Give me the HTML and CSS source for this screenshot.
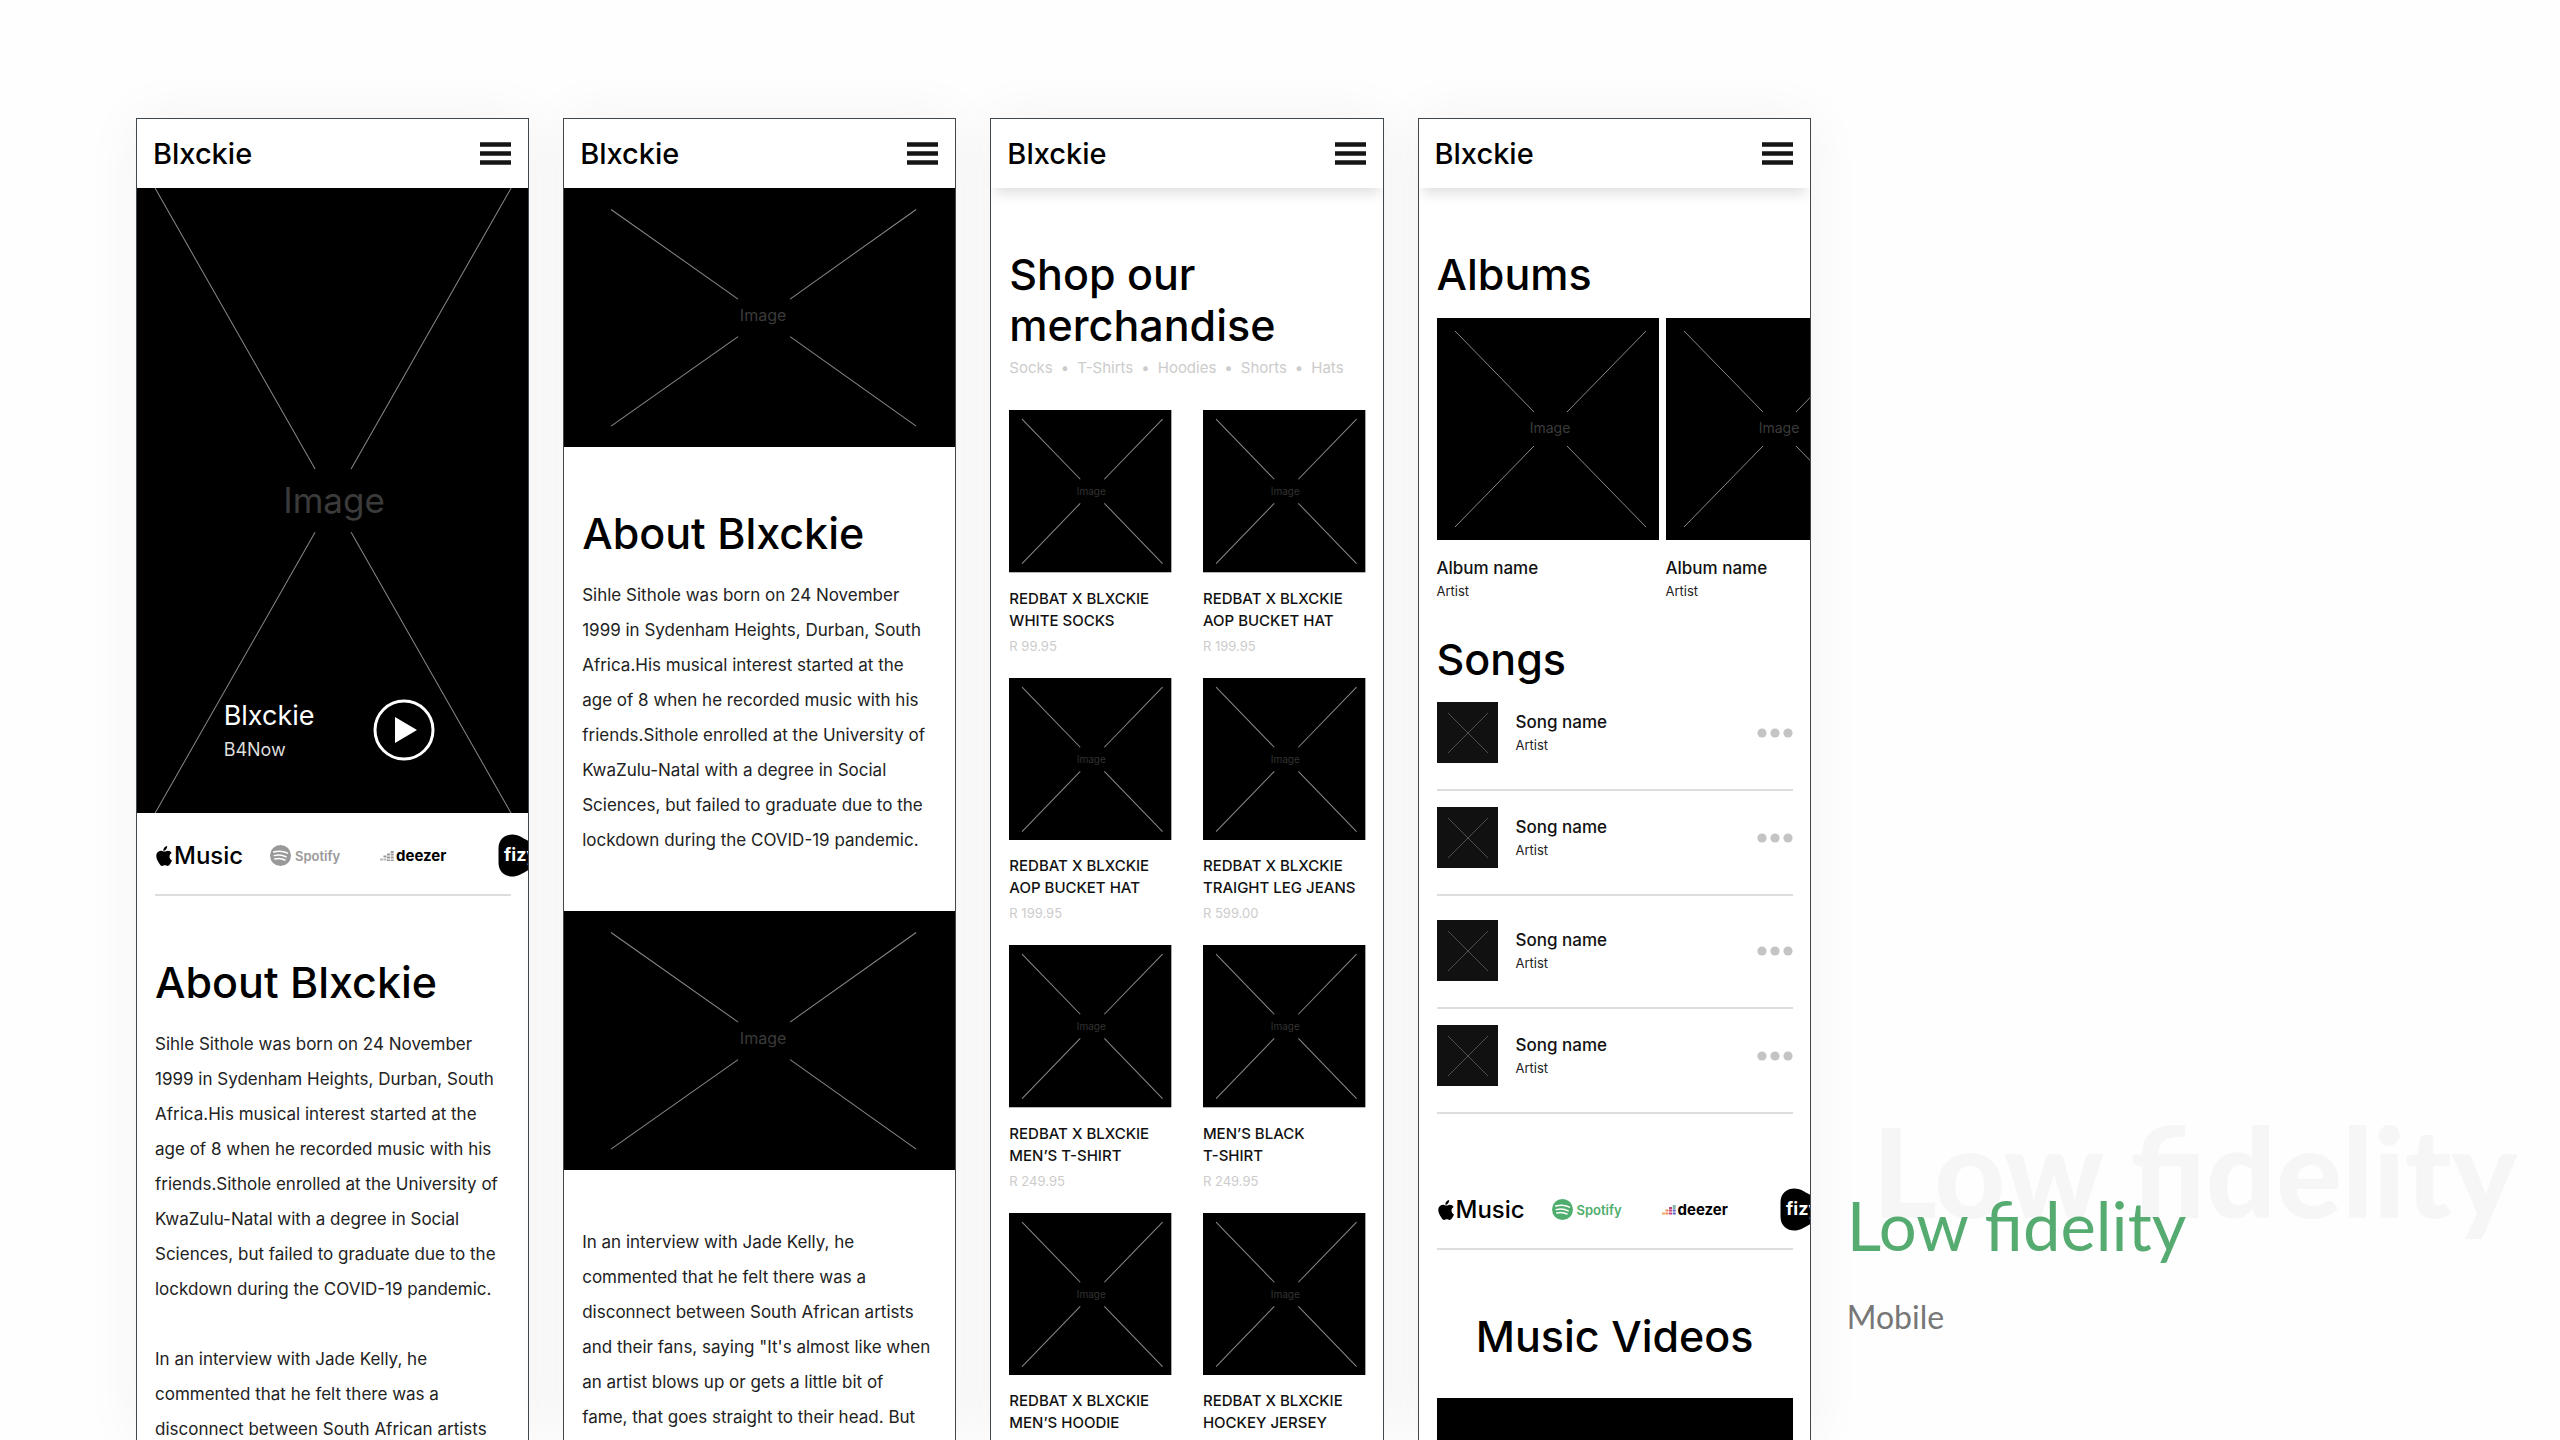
FILE: index.html
```html
<!DOCTYPE html>
<html lang="en">

<head>
    <meta charset="UTF-8">
    <meta name="viewport" content="width=device-width, initial-scale=1.0">
    <title>Blxckie - Low fidelity</title>
    <link rel="stylesheet" href="styles.css">
</head>

<body>
    <!-- shared drawings -->
    <svg class="sprite" aria-hidden="true">
        <symbol id="burger" viewBox="0 0 31 23">
            <path d="M0 2.500H31M0 11.500H31M0 20.500H31" stroke="#151515" stroke-width="4.400" />
        </symbol>
        <symbol id="img-wide" viewBox="0 0 391 259">
            <rect width="391" height="259" />
            <path d="M47 21.500L174 111M352 21.500L226 111M47 238L174 148.500M352 238L226 148.500" stroke="#888" fill="none" />
        </symbol>
        <symbol id="img-card" viewBox="0 0 162 162">
            <rect width="162" height="162" />
            <path d="M13 9L71 69M153 9L95 69M13 153L71 93M153 153L95 93" stroke="#888" fill="none" />
        </symbol>
        <symbol id="img-album" viewBox="0 0 222 222">
            <rect width="222" height="222" />
            <path d="M18 13L97 94M209 13L130 94M18 209L97 128M209 209L130 128" stroke="#888" fill="none" />
        </symbol>
        <symbol id="img-song" viewBox="0 0 61 61">
            <rect width="61" height="61" fill="#111" />
            <path d="M11 11L51 51M51 11L11 51" stroke="#505050" fill="none" />
        </symbol>
        <symbol id="dots" viewBox="0 0 36 10">
            <circle cx="5" cy="5" r="4.600" />
            <circle cx="18" cy="5" r="4.600" />
            <circle cx="31" cy="5" r="4.600" />
        </symbol>
        <symbol id="apple" viewBox="0 0 16 20">
            <path d="M11.200 0C11.300 1.400 10.800 2.600 10 3.500C9.300 4.300 8.300 4.900 7.300 4.800C7.200 3.500 7.700 2.400 8.400 1.600C9.100 .7 10.200 .1 11.200 0ZM15.600 6.900C14.200 7.800 13.500 9 13.500 10.600C13.500 12.500 14.600 13.900 16 14.500C15.600 15.700 14.900 17 14.100 18.100C13.400 19.100 12.700 20 11.600 20C10.500 20 10.200 19.300 8.900 19.300C7.600 19.300 7.200 20 6.200 20C5.100 20 4.300 19 3.600 18C0 13.200 -.9 8 2 5.900C3 5.100 4.100 4.800 5.200 4.800C6.500 4.800 7.400 5.600 8.500 5.600C9.600 5.600 10.300 4.800 11.900 4.800C13.400 4.800 14.800 5.700 15.600 6.900Z" />
        </symbol>
        <symbol id="spotify" viewBox="0 0 21 21">
            <circle cx="10.500" cy="10.500" r="10.500" />
            <path d="M3.700 7C8.500 5.600 13.500 6 17.500 8.200M4.200 10.600C8.300 9.400 12.600 9.900 16.200 11.800M4.800 13.900C8.300 13 11.800 13.300 15 15" fill="none" stroke="#fff" stroke-width="1.500" stroke-linecap="round" />
        </symbol>
        <symbol id="blob" viewBox="0 0 44 43">
            <path d="M.5 14.500C.5 5 7 .5 14.500 .5C20 .5 25 4 32 8C40 13 43.500 17 43.500 21.500C43.500 26 40 30 32 35C25 39 20 42.500 14.500 42.500C7 42.500 .5 38 .5 28.500Z" />
        </symbol>
    </svg>

    <main class="board">
        <!-- Home -->
        <section class="screen">
            <header class="bar">
                <a class="brand" href="#">Blxckie</a>
                <button class="menu" type="button" aria-label="Menu"><svg width="31" height="23"><use href="#burger" /></svg></button>
            </header>
            <div class="hero">
                <svg class="picture" viewBox="0 0 391 625">
                    <rect width="391" height="625" />
                    <path d="M18 0L178 281M374 0L214 281M18 625L178 344M374 625L214 344" stroke="#888" fill="none" />
                    <text x="197" y="325" font-size="35">Image</text>
                </svg>
                <div class="player">
                    <div>
                        <p class="player-artist">Blxckie</p>
                        <p class="player-track">B4Now</p>
                    </div>
                    <button class="play" type="button" aria-label="Play">
                        <svg width="62" height="62" viewBox="0 0 62 62">
                            <circle cx="31" cy="31" r="29" fill="none" stroke="#fff" stroke-width="3" />
                            <path d="M22 18L44 31L22 44Z" fill="#fff" />
                        </svg>
                    </button>
                </div>
            </div>
            <div class="services mono">
                <a class="apple" href="#"><svg width="16" height="20"><use href="#apple" /></svg>Music</a>
                <a class="spotify" href="#"><svg width="21" height="21"><use href="#spotify" /></svg>Spotify</a>
                <a class="deezer" href="#"><svg width="14" height="10" viewBox="0 0 14 10">
                        <path d="M0 8.500H3M3.500 8.500H6.500" stroke="#bbb" stroke-width="2" />
                        <path d="M7 9.500H10M7 6.500H10M7 3.500H10M3.500 5.500H6.500M10.700 9.500H13.700M10.700 6.500H13.700M10.700 3.500H13.700M10.700 1H13.700" stroke="#999" stroke-width="2" />
                    </svg>deezer</a>
                <a class="fizy" href="#"><svg width="44" height="43" viewBox="0 0 44 43"><use href="#blob" /><text x="6" y="27" font-size="18">fizy</text></svg></a>
            </div>
            <div class="content">
                <h2>About Blxckie</h2>
                <p class="text">Sihle Sithole was born on 24 November<br>
                    1999 in Sydenham Heights, Durban, South<br>
                    Africa.His musical interest started at the<br>
                    age of 8 when he recorded music with his<br>
                    friends.Sithole enrolled at the University of<br>
                    KwaZulu-Natal with a degree in Social<br>
                    Sciences, but failed to graduate due to the<br>
                    lockdown during the COVID-19 pandemic.<br>
                    <br>
                    In an interview with Jade Kelly, he<br>
                    commented that he felt there was a<br>
                    disconnect between South African artists</p>
            </div>
        </section>

        <!-- About -->
        <section class="screen">
            <header class="bar">
                <a class="brand" href="#">Blxckie</a>
                <button class="menu" type="button" aria-label="Menu"><svg width="31" height="23"><use href="#burger" /></svg></button>
            </header>
            <svg class="picture" viewBox="0 0 391 259"><use href="#img-wide" /><text x="199" y="133" font-size="16">Image</text></svg>
            <div class="content">
                <h2>About Blxckie</h2>
                <p class="text">Sihle Sithole was born on 24 November<br>
                    1999 in Sydenham Heights, Durban, South<br>
                    Africa.His musical interest started at the<br>
                    age of 8 when he recorded music with his<br>
                    friends.Sithole enrolled at the University of<br>
                    KwaZulu-Natal with a degree in Social<br>
                    Sciences, but failed to graduate due to the<br>
                    lockdown during the COVID-19 pandemic.</p>
            </div>
            <svg class="picture spaced" viewBox="0 0 391 259"><use href="#img-wide" /><text x="199" y="133" font-size="16">Image</text></svg>
            <div class="content continued">
                <p class="text">In an interview with Jade Kelly, he<br>
                    commented that he felt there was a<br>
                    disconnect between South African artists<br>
                    and their fans, saying "It's almost like when<br>
                    an artist blows up or gets a little bit of<br>
                    fame, that goes straight to their head. But</p>
            </div>
        </section>

        <!-- Shop -->
        <section class="screen">
            <header class="bar shadow">
                <a class="brand" href="#">Blxckie</a>
                <button class="menu" type="button" aria-label="Menu"><svg width="31" height="23"><use href="#burger" /></svg></button>
            </header>
            <div class="content">
                <h2>Shop our<br>merchandise</h2>
                <nav class="categories">
                    <a href="#">Socks</a><span>•</span><a href="#">T-Shirts</a><span>•</span><a href="#">Hoodies</a><span>•</span><a href="#">Shorts</a><span>•</span><a href="#">Hats</a>
                </nav>
                <div class="products">
                    <article>
                        <svg class="picture" viewBox="0 0 162 162"><use href="#img-card" /><text x="82" y="85" font-size="10">Image</text></svg>
                        <h3>REDBAT X BLXCKIE<br>WHITE SOCKS</h3>
                        <p class="price">R 99.95</p>
                    </article>
                    <article>
                        <svg class="picture" viewBox="0 0 162 162"><use href="#img-card" /><text x="82" y="85" font-size="10">Image</text></svg>
                        <h3>REDBAT X BLXCKIE<br>AOP BUCKET HAT</h3>
                        <p class="price">R 199.95</p>
                    </article>
                    <article>
                        <svg class="picture" viewBox="0 0 162 162"><use href="#img-card" /><text x="82" y="85" font-size="10">Image</text></svg>
                        <h3>REDBAT X BLXCKIE<br>AOP BUCKET HAT</h3>
                        <p class="price">R 199.95</p>
                    </article>
                    <article>
                        <svg class="picture" viewBox="0 0 162 162"><use href="#img-card" /><text x="82" y="85" font-size="10">Image</text></svg>
                        <h3>REDBAT X BLXCKIE<br>TRAIGHT LEG JEANS</h3>
                        <p class="price">R 599.00</p>
                    </article>
                    <article>
                        <svg class="picture" viewBox="0 0 162 162"><use href="#img-card" /><text x="82" y="85" font-size="10">Image</text></svg>
                        <h3>REDBAT X BLXCKIE<br>MEN’S T-SHIRT</h3>
                        <p class="price">R 249.95</p>
                    </article>
                    <article>
                        <svg class="picture" viewBox="0 0 162 162"><use href="#img-card" /><text x="82" y="85" font-size="10">Image</text></svg>
                        <h3>MEN’S BLACK<br>T-SHIRT</h3>
                        <p class="price">R 249.95</p>
                    </article>
                    <article>
                        <svg class="picture" viewBox="0 0 162 162"><use href="#img-card" /><text x="82" y="85" font-size="10">Image</text></svg>
                        <h3>REDBAT X BLXCKIE<br>MEN’S HOODIE</h3>
                    </article>
                    <article>
                        <svg class="picture" viewBox="0 0 162 162"><use href="#img-card" /><text x="82" y="85" font-size="10">Image</text></svg>
                        <h3>REDBAT X BLXCKIE<br>HOCKEY JERSEY</h3>
                    </article>
                </div>
            </div>
        </section>

        <!-- Music -->
        <section class="screen">
            <header class="bar shadow">
                <a class="brand" href="#">Blxckie</a>
                <button class="menu" type="button" aria-label="Menu"><svg width="31" height="23"><use href="#burger" /></svg></button>
            </header>
            <div class="content">
                <h2>Albums</h2>
                <div class="albums">
                    <article>
                        <svg class="picture" viewBox="0 0 222 222"><use href="#img-album" /><text x="113" y="115" font-size="14">Image</text></svg>
                        <h3 class="name">Album name</h3>
                        <p class="artist">Artist</p>
                    </article>
                    <article>
                        <svg class="picture" viewBox="0 0 222 222"><use href="#img-album" /><text x="113" y="115" font-size="14">Image</text></svg>
                        <h3 class="name">Album name</h3>
                        <p class="artist">Artist</p>
                    </article>
                </div>
                <h2 class="songs-title">Songs</h2>
                <ul class="songs">
                    <li>
                        <svg width="61" height="61"><use href="#img-song" /></svg>
                        <div>
                            <h3 class="name">Song name</h3>
                            <p class="artist">Artist</p>
                        </div>
                        <button class="more" type="button" aria-label="More"><svg width="36" height="10"><use href="#dots" /></svg></button>
                    </li>
                    <li>
                        <svg width="61" height="61"><use href="#img-song" /></svg>
                        <div>
                            <h3 class="name">Song name</h3>
                            <p class="artist">Artist</p>
                        </div>
                        <button class="more" type="button" aria-label="More"><svg width="36" height="10"><use href="#dots" /></svg></button>
                    </li>
                    <li class="group">
                        <svg width="61" height="61"><use href="#img-song" /></svg>
                        <div>
                            <h3 class="name">Song name</h3>
                            <p class="artist">Artist</p>
                        </div>
                        <button class="more" type="button" aria-label="More"><svg width="36" height="10"><use href="#dots" /></svg></button>
                    </li>
                    <li>
                        <svg width="61" height="61"><use href="#img-song" /></svg>
                        <div>
                            <h3 class="name">Song name</h3>
                            <p class="artist">Artist</p>
                        </div>
                        <button class="more" type="button" aria-label="More"><svg width="36" height="10"><use href="#dots" /></svg></button>
                    </li>
                </ul>
            </div>
            <div class="services color">
                <a class="apple" href="#"><svg width="16" height="20"><use href="#apple" /></svg>Music</a>
                <a class="spotify" href="#"><svg width="21" height="21"><use href="#spotify" /></svg>Spotify</a>
                <a class="deezer" href="#"><svg width="14" height="10" viewBox="0 0 14 10">
                        <path d="M0 8.500H3" stroke="#f2a65a" stroke-width="2" />
                        <path d="M3.500 8.500H6.500M3.500 5.500H6.500" stroke="#f08a5d" stroke-width="2" />
                        <path d="M7 8.500H10M7 5.500H10M7 3H10" stroke="#c4457c" stroke-width="2" />
                        <path d="M10.700 8.500H13.700M10.700 5.500H13.700" stroke="#5b5fc0" stroke-width="2" />
                        <path d="M10.700 3H13.700M10.700 1H13.700" stroke="#7fb6a8" stroke-width="2" />
                    </svg>deezer</a>
                <a class="fizy" href="#"><svg width="44" height="43" viewBox="0 0 44 43"><use href="#blob" /><text x="6" y="27" font-size="18">fizy</text></svg></a>
            </div>
            <div class="content">
                <h2 class="centered">Music Videos</h2>
                <div class="video"></div>
            </div>
        </section>

        <aside class="caption">
            <span class="ghost" aria-hidden="true">Low fidelity</span>
            <h1>Low fidelity</h1>
            <p>Mobile</p>
        </aside>
    </main>
</body>

</html>
```
FILE: styles.css
```css
* {
    box-sizing: border-box;
}

body {
    margin: 0;
    background-color: #fefefe;
    font-family: Inter, sans-serif;
    color: #000;
}

h1,
h2,
h3,
p,
ul {
    margin: 0;
    padding: 0;
    font-weight: 400;
}

a {
    color: inherit;
    text-decoration: none;
}

button {
    padding: 0;
    border: 0;
    background: none;
    line-height: 0;
}

svg {
    display: block;
    flex-shrink: 0;
}

.sprite {
    position: absolute;
    width: 0;
    height: 0;
}

.board {
    display: grid;
    grid-template-columns: repeat(4, minmax(0, 3fr)) minmax(0, 5fr);
    gap: 34px;
    height: 100vh;
    padding: 118px 60px 0 136px;
    overflow: hidden;
}

.screen {
    overflow: hidden;
    border: 1px solid #40484e;
    border-bottom: 0;
    background-color: #fff;
    box-shadow: 0 0 54px rgba(0, 0, 0, 0.05);
}

.bar {
    position: relative;
    display: flex;
    justify-content: space-between;
    align-items: center;
    height: 69px;
    padding: 0 17px 0 16px;
    background-color: #fff;
}

.shadow {
    box-shadow: 0 10px 12px -4px rgba(0, 0, 0, 0.12);
}

.brand {
    font-size: 29px;
    font-weight: 500;
}

.picture {
    width: 100%;
    height: auto;
}

.picture text {
    fill: #3b3b3b;
    text-anchor: middle;
}

.hero {
    position: relative;
}

/* lies over the hero picture */
.player {
    position: absolute;
    left: 0;
    right: 0;
    bottom: 49px;
    display: flex;
    justify-content: center;
    align-items: center;
    gap: 58px;
    padding-right: 7px;
    color: #fff;
}

.player-artist {
    padding-top: 4px;
    font-size: 27px;
    line-height: 32px;
}

.player-track {
    padding-top: 4px;
    font-size: 18px;
    line-height: 28px;
    color: #ddd;
}

.services {
    display: grid;
    grid-template-columns: 115px 110px 118px minmax(0, 1fr);
    align-items: center;
    padding: 21px 0 0 18px;
}

/* divider under the logos */
.services::after {
    content: "";
    grid-column: 1 / -1;
    height: 2px;
    margin: 17px 17px 0 0;
    background-color: #ddd;
}

.services a {
    display: flex;
    align-items: center;
}

.services .apple {
    gap: 2px;
    padding-left: 1px;
    font-size: 24px;
    font-weight: 500;
}

.services .spotify {
    gap: 4px;
    font-size: 13px;
    font-weight: 600;
}

.services .deezer {
    gap: 2px;
    font-size: 15px;
    font-weight: 700;
}

.mono .spotify {
    color: #999;
    fill: #999;
}

.color .spotify {
    color: #4fae6e;
    fill: #4fae6e;
}

.fizy text {
    fill: #fff;
    font-weight: 700;
}

.color {
    margin-top: 53px;
}

.content {
    padding: 61px 17px 0 18px;
}

.spaced {
    margin-top: 53px;
}

h2 {
    font-size: 43px;
    font-weight: 500;
    line-height: 51px;
}

.text {
    margin-top: 19px;
    font-size: 17px;
    line-height: 35px;
    color: #222;
    white-space: nowrap;
}

.continued {
    padding-top: 36px;
}

.categories {
    display: flex;
    gap: 8px;
    margin-top: 7px;
    font-size: 15px;
    line-height: 20px;
    color: #ccc;
    white-space: nowrap;
}

.products {
    display: grid;
    grid-template-columns: 1fr 1fr;
    gap: 22px 31px;
    margin-top: 32px;
}

.products .picture text {
    fill: #333;
}

.products h3 {
    margin-top: 15px;
    font-size: 15px;
    font-weight: 500;
    line-height: 22px;
    color: #111;
    white-space: nowrap;
}

.price {
    margin-top: 4px;
    font-size: 13px;
    line-height: 20px;
    color: #ccc;
}

.albums {
    display: flex;
    gap: 7px;
    margin-top: 18px;
}

.albums article {
    flex: 0 0 222px;
}

.name {
    font-size: 17px;
    font-weight: 500;
    line-height: 22px;
    color: #111;
}

.albums .name {
    margin-top: 17px;
}

.artist {
    margin-top: 3px;
    font-size: 13px;
    line-height: 18px;
    color: #222;
}

.songs-title {
    margin-top: 34px;
}

.songs {
    margin-top: 17px;
    list-style: none;
}

.songs li {
    display: flex;
    align-items: center;
    gap: 18px;
    padding-bottom: 26px;
    margin-bottom: 16px;
    border-bottom: 2px solid #ddd;
}

.songs .group {
    margin-top: 24px;
}

.more {
    margin-left: auto;
    fill: #c4c4c4;
}

.centered {
    text-align: center;
}

.video {
    height: 200px;
    margin-top: 36px;
    background-color: #000;
}

.caption {
    position: relative;
    display: flex;
    flex-direction: column;
    justify-content: flex-end;
    gap: 32px;
    padding: 0 0 103px 2px;
    font-family: Lato, sans-serif;
}

.caption h1 {
    position: relative;
    font-size: 67px;
    line-height: 80px;
    color: #55ab70;
}

.caption p {
    font-size: 32px;
    line-height: 40px;
    color: #777;
}

/* big pale title behind the heading */
.ghost {
    position: absolute;
    left: 28px;
    bottom: 194px;
    font-size: 123px;
    font-weight: 900;
    line-height: 150px;
    color: #f6f6f6;
    white-space: nowrap;
}
```
